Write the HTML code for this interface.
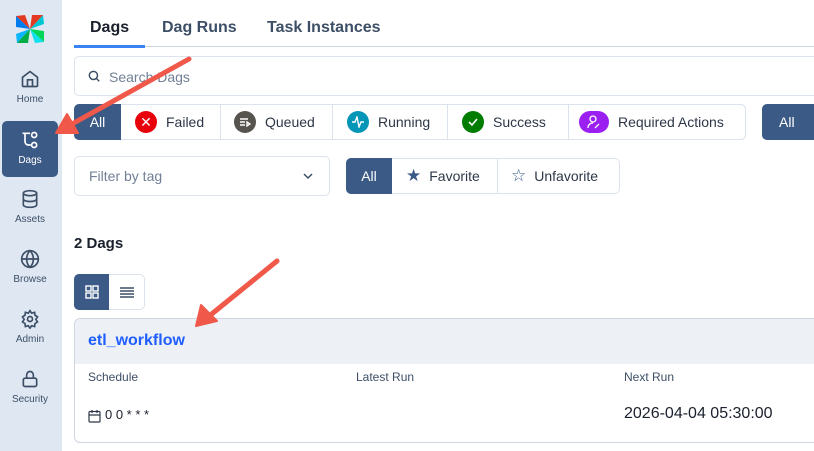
<!DOCTYPE html>
<html><head><style>
*{box-sizing:border-box;margin:0;padding:0}
body{width:814px;height:451px;overflow:hidden;background:#fff;font-family:"Liberation Sans",sans-serif;position:relative;color:#1a202c}
.a{position:absolute}
#side{left:0;top:0;width:62px;height:451px;background:#dfe7f3}
.nav{position:absolute;left:2px;width:56px;text-align:center;font-size:10px;color:#3d4f66}
.nav svg{display:block;margin:0 auto 5px}
.btn{position:absolute;height:36px;border:1px solid #dde3ec;display:flex;align-items:center;font-size:14px;color:#2d3748}
.ic{width:22px;height:22px;border-radius:50%;display:inline-flex;align-items:center;justify-content:center;margin-right:9px}
</style></head><body>
<div id="side" class="a">
<svg class="a" style="left:13px;top:12px" width="34" height="34" viewBox="0 0 34 34">
<path d="M17 17 L3 4 L12 3 Z" fill="#e43921"/><path d="M17 17 L30 3 L31 12 Z" fill="#00c7d4"/>
<path d="M17 17 L31 30 L22 31 Z" fill="#11e1ee"/><path d="M17 17 L4 31 L3 22 Z" fill="#0cb6ff"/>
<path d="M17 17 L3 4 L3 15Z" fill="#017cee"/><path d="M17 17 L30 3 L19 3Z" fill="#e43921"/>
<path d="M17 17 L31 30 L31 19Z" fill="#04d659"/><path d="M17 17 L4 31 L15 31Z" fill="#00ad46"/>
</svg>
<div class="nav" style="top:69px"><svg width="20" height="20" viewBox="0 0 24 24" fill="none" stroke="#3d4f66" stroke-width="2"><path d="M3 10l9-7 9 7v10a1 1 0 0 1-1 1H4a1 1 0 0 1-1-1z"/><path d="M9 21v-8h6v8"/></svg>Home</div>
<div class="a" style="left:2px;top:121px;width:56px;height:56px;background:#3b5a86;border-radius:5px"></div>
<div class="nav" style="top:130px;color:#fff"><svg width="20" height="20" viewBox="0 0 24 24" fill="none" stroke="#fff" stroke-width="2"><path d="M3 4h9M6 4v10a4 4 0 0 0 4 4h3"/><circle cx="17" cy="6" r="3"/><circle cx="17" cy="18" r="3"/></svg>Dags</div>
<div class="nav" style="top:189px"><svg width="20" height="20" viewBox="0 0 24 24" fill="none" stroke="#3d4f66" stroke-width="2"><ellipse cx="12" cy="5" rx="8" ry="3"/><path d="M4 5v14c0 1.7 3.6 3 8 3s8-1.3 8-3V5M4 12c0 1.7 3.6 3 8 3s8-1.3 8-3"/></svg>Assets</div>
<div class="nav" style="top:249px"><svg width="20" height="20" viewBox="0 0 24 24" fill="none" stroke="#3d4f66" stroke-width="2"><circle cx="12" cy="12" r="10"/><path d="M2 12h20M12 2c3 3 4 6.5 4 10s-1 7-4 10c-3-3-4-6.5-4-10s1-7 4-10z"/></svg>Browse</div>
<div class="nav" style="top:309px"><svg width="20" height="20" viewBox="0 0 24 24" fill="none" stroke="#3d4f66" stroke-width="2"><circle cx="12" cy="12" r="3"/><path d="M12 2l2 3 3.5-1 .5 3.5 3 2-2 3 2 3-3 2-.5 3.5-3.5-1-2 3-2-3-3.5 1-.5-3.5-3-2 2-3-2-3 3-2L6.5 4 10 5z"/></svg>Admin</div>
<div class="nav" style="top:369px"><svg width="20" height="20" viewBox="0 0 24 24" fill="none" stroke="#3d4f66" stroke-width="2"><rect x="4" y="11" width="16" height="10" rx="2"/><path d="M8 11V7a4 4 0 0 1 8 0v4"/></svg>Security</div>
</div>

<div class="a" style="left:74px;top:46px;width:740px;height:1px;background:#cfd6e0"></div>
<div class="a" style="left:74px;top:45px;width:71px;height:3px;background:#3b82f6"></div>
<div class="a" style="left:90px;top:19px;font-size:16px;font-weight:bold;color:#1a202c">Dags</div>
<div class="a" style="left:162px;top:19px;font-size:16px;font-weight:bold;color:#3d4f66">Dag Runs</div>
<div class="a" style="left:267px;top:19px;font-size:16px;font-weight:bold;color:#3d4f66">Task Instances</div>

<div class="a" style="left:74px;top:56px;width:750px;height:40px;border:1px solid #dde3ec;border-radius:5px"></div>
<svg class="a" style="left:87px;top:69px" width="14" height="14" viewBox="0 0 24 24" fill="none" stroke="#3d4f66" stroke-width="2.5"><circle cx="11" cy="11" r="7"/><path d="M16 16l5 5"/></svg>
<div class="a" style="left:109px;top:69px;font-size:14px;color:#718096">Search Dags</div>

<div class="btn" style="left:74px;top:104px;width:672px;border-radius:5px"></div>
<div class="btn" style="left:74px;top:104px;width:47px;background:#3b5a86;color:#fff;justify-content:center;border-radius:5px 0 0 5px;border-color:#3b5a86">All</div>
<div class="btn" style="left:121px;top:104px;width:100px;padding-left:14px;border-width:1px 1px 1px 0"><span class="ic" style="background:#e8000b;color:#fff;font-size:14px">✕</span>Failed</div>
<div class="btn" style="left:221px;top:104px;width:112px;padding-left:13px;border-width:1px 1px 1px 0"><span class="ic" style="background:#57534e"><svg width="12" height="12" viewBox="0 0 12 12" stroke="#fff" fill="none" stroke-width="1.4"><path d="M1 3h8M1 6h5M1 9h5M8 6l3 2-3 2z"/></svg></span>Queued</div>
<div class="btn" style="left:333px;top:104px;width:115px;padding-left:14px;border-width:1px 1px 1px 0"><span class="ic" style="background:#0595b7"><svg width="14" height="12" viewBox="0 0 14 12" stroke="#fff" fill="none" stroke-width="1.4"><path d="M1 6h3l2-5 2 10 2-5h3"/></svg></span>Running</div>
<div class="btn" style="left:448px;top:104px;width:121px;padding-left:14px;border-width:1px 1px 1px 0"><span class="ic" style="background:#007c00"><svg width="12" height="12" viewBox="0 0 12 12" stroke="#fff" fill="none" stroke-width="1.6"><path d="M2 6l3 3 5-6"/></svg></span>Success</div>
<div class="btn" style="left:569px;top:104px;width:177px;padding-left:10px;border-width:1px 1px 1px 0;border-radius:0 5px 5px 0"><span class="ic" style="background:#9a1ff0;width:30px;height:22px;border-radius:11px"><svg width="14" height="14" viewBox="0 0 14 14" stroke="#fff" fill="none" stroke-width="1.3"><circle cx="6" cy="4" r="3"/><path d="M1 13c0-3 2-5 5-5M8 13l4-4"/></svg></span>Required Actions</div>
<div class="btn" style="left:762px;top:104px;width:60px;background:#3b5a86;color:#fff;padding-left:16px;border-radius:5px;border-color:#3b5a86">All</div>

<div class="a" style="left:74px;top:156px;width:256px;height:40px;border:1px solid #dde3ec;border-radius:5px"></div>
<div class="a" style="left:89px;top:168px;font-size:14px;color:#718096">Filter by tag</div>
<svg class="a" style="left:302px;top:170px" width="12" height="12" viewBox="0 0 12 12" stroke="#3d4f66" fill="none" stroke-width="1.5"><path d="M2 4l4 4 4-4"/></svg>

<div class="btn" style="left:346px;top:158px;width:46px;background:#3b5a86;color:#fff;justify-content:center;border-radius:5px 0 0 5px;border-color:#3b5a86">All</div>
<div class="btn" style="left:392px;top:158px;width:106px;padding-left:14px;border-width:1px 1px 1px 0"><span style="color:#3b5a86;font-size:17px;margin-right:8px">★</span>Favorite</div>
<div class="btn" style="left:498px;top:158px;width:122px;padding-left:13px;border-width:1px 1px 1px 0;border-radius:0 5px 5px 0"><span style="color:#3b5a86;font-size:17px;margin-right:8px">☆</span>Unfavorite</div>

<div class="a" style="left:74px;top:235px;font-size:15px;font-weight:bold;color:#1a202c">2 Dags</div>
<div class="a" style="left:74px;top:274px;width:71px;height:36px;border:1px solid #dde3ec;border-radius:5px"></div>
<div class="a" style="left:74px;top:274px;width:35px;height:36px;background:#3b5a86;border-radius:5px 0 0 5px"></div>
<svg class="a" style="left:85px;top:285px" width="14" height="14" viewBox="0 0 14 14" fill="none" stroke="#fff" stroke-width="1.4"><rect x="1" y="1" width="5" height="5"/><rect x="8" y="1" width="5" height="5"/><rect x="1" y="8" width="5" height="5"/><rect x="8" y="8" width="5" height="5"/></svg>
<svg class="a" style="left:120px;top:286px" width="14" height="12" viewBox="0 0 14 12" stroke="#3d4f66" stroke-width="1.4"><path d="M0 2h14M0 5h14M0 8h14M0 11h14"/></svg>

<div class="a" style="left:74px;top:318px;width:760px;height:125px;border:1px solid #cfd6e0;border-radius:6px;overflow:hidden">
<div style="height:45px;background:#edf0f5;padding:13px 0 0 13px;font-size:16px;font-weight:bold;color:#1f5eff">etl_workflow</div>
</div>
<div class="a" style="left:88px;top:370px;font-size:12px;color:#3d4f66">Schedule</div>
<div class="a" style="left:356px;top:370px;font-size:12px;color:#3d4f66">Latest Run</div>
<div class="a" style="left:624px;top:370px;font-size:12px;color:#3d4f66">Next Run</div>
<svg class="a" style="left:88px;top:409px" width="13" height="14" viewBox="0 0 13 14" fill="none" stroke="#2d3748" stroke-width="1.2"><rect x="1" y="2.5" width="11" height="10.5" rx="1"/><path d="M1 6h11M4 1v3M9 1v3"/></svg>
<div class="a" style="left:105px;top:407px;font-size:13px;color:#1a202c">0 0 * * *</div>
<div class="a" style="left:624px;top:405px;font-size:16px;color:#1a202c">2026-04-04 05:30:00</div>

<svg class="a" style="left:0;top:0" width="814" height="451">
<g stroke="#f0584a" stroke-width="5" stroke-linecap="round" fill="none">
<path d="M189 59 L72 124"/><path d="M277 261 L208 317"/></g>
<g fill="#f0584a" stroke="#f0584a" stroke-width="2" stroke-linejoin="round">
<path d="M56 133 L67 114 L78 133 Z"/><path d="M196 326 L201 305 L217 321 Z"/></g>
</svg>
</body></html>
